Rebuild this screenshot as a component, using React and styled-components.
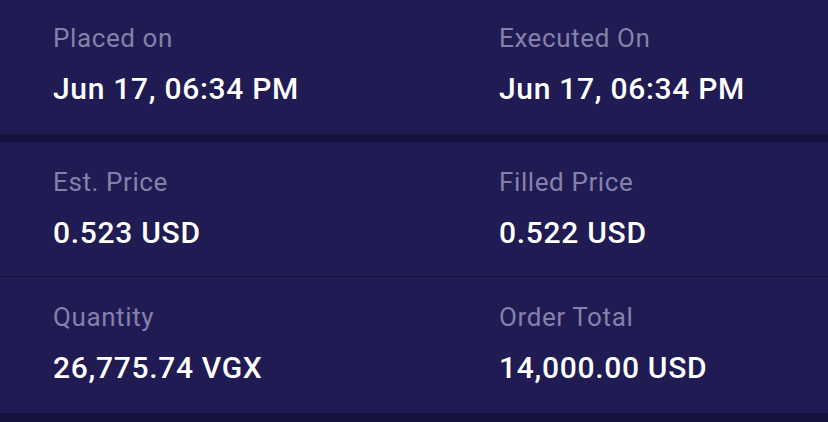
import React from 'react';
import styled, { createGlobalStyle } from 'styled-components';

const GlobalStyle = createGlobalStyle`
  body {
    margin: 0;
    background: #16123f;
    font-family: Roboto, "Noto Sans", sans-serif;
    -webkit-font-smoothing: antialiased;
  }
`;

const groups = [
  {
    divider: 'band',
    top: 23,
    bottom: 27,
    fields: [
      { label: 'Placed on', value: 'Jun 17, 06:34 PM' },
      { label: 'Executed On', value: 'Jun 17, 06:34 PM' },
    ],
  },
  {
    divider: 'line',
    top: 25,
    bottom: 25,
    fields: [
      { label: 'Est. Price', value: '0.523 USD' },
      { label: 'Filled Price', value: '0.522 USD' },
    ],
  },
  {
    divider: 'band',
    top: 25,
    bottom: 27,
    fields: [
      { label: 'Quantity', value: '26,775.74 VGX' },
      { label: 'Order Total', value: '14,000.00 USD' },
    ],
  },
];

function App() {
  return (
    <>
      <GlobalStyle />
      <Details>
        {groups.map((group, i) => (
          <Section key={i} $divider={group.divider} $top={group.top} $bottom={group.bottom}>
            {group.fields.map((field) => (
              <Field key={field.label}>
                <Label>{field.label}</Label>
                <Value>{field.value}</Value>
              </Field>
            ))}
          </Section>
        ))}
      </Details>
    </>
  );
}

const Details = styled.div`
  display: flex;
  flex-direction: column;
`;

const Section = styled.div`
  display: grid;
  grid-template-columns: 446px 1fr;
  padding: ${(p) => p.$top}px 0 ${(p) => p.$bottom}px 53px;
  background: #201b53;
  margin-bottom: ${(p) => (p.$divider === 'band' ? 8 : 0)}px;
  border-bottom: ${(p) => (p.$divider === 'line' ? '1px solid #140f3a' : 'none')};
`;

const Field = styled.div`
  display: flex;
  flex-direction: column;
`;

const Label = styled.div`
  font-size: 26px;
  line-height: 30px;
  color: #8581aa;
  letter-spacing: 0.6px;
`;

const Value = styled.div`
  margin-top: 18px;
  font-size: 30px;
  line-height: 36px;
  font-weight: 500;
  color: #ffffff;
  letter-spacing: 0.7px;
`;

export default App;
